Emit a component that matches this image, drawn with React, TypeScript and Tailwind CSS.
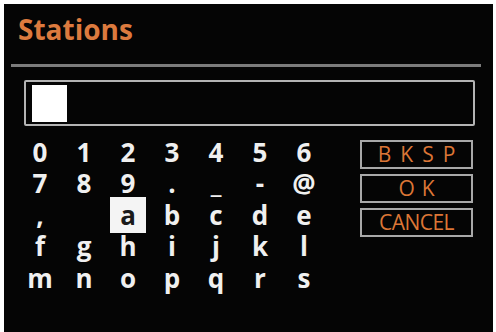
import React from 'react';

const rows: string[][] = [
  ['0', '1', '2', '3', '4', '5', '6'],
  ['7', '8', '9', '.', '_', '-', '@'],
  [',', ' ', 'a', 'b', 'c', 'd', 'e'],
  ['f', 'g', 'h', 'i', 'j', 'k', 'l'],
  ['m', 'n', 'o', 'p', 'q', 'r', 's'],
];

const selected = 'a';

const KeyCell: React.FC<{ ch: string }> = ({ ch }) => {
  const active = ch === selected;
  return (
    <div className="flex items-center justify-center h-[31.5px] w-[44px]">
      {active ? (
        <span className="flex items-center justify-center w-[36px] h-[36px] bg-[#f4f4f4] text-[#1a1a1a] leading-none">
          {ch}
        </span>
      ) : (
        <span className="leading-none">{ch}</span>
      )}
    </div>
  );
};

const ActionButton: React.FC<{ label: string; tracking?: string }> = ({ label, tracking = '' }) => (
  <div className="flex items-center justify-center w-[113px] h-[29px] border-2 border-[#a8a8a8] text-[#dc7636] text-[21px] font-medium leading-none">
    <span className={tracking}>{label}</span>
  </div>
);

export default function App() {
  return (
    <div className="w-[496px] h-[332px] bg-white pt-[4px] pl-[4px] pr-[3px] overflow-hidden">
      <div
        className="w-full h-[328px] bg-[#050505] flex flex-col"
        style={{ fontFamily: '"Open Sans", "Liberation Sans", sans-serif' }}
      >
        {/* Header */}
        <h1 className="ml-[14px] mt-[11px] text-[28px] leading-[28px] font-bold text-[#dc7a3e]">
          Stations
        </h1>
        <div className="ml-[7px] mt-[21px] w-[470px] h-[3px] bg-[#7c7c7c]" />

        {/* Text entry */}
        <div className="ml-[20px] mt-[13px] w-[451px] h-[46px] border-2 border-[#b4b4b4] rounded-[2px] flex items-center pl-[6px]">
          <div className="w-[35px] h-[37px] bg-white" />
        </div>

        {/* Keyboard */}
        <div className="flex mt-[10px]">
          <div className="ml-[14px] flex flex-col text-[26px] font-bold text-[#f0f0f0]">
            {rows.map((row, i) => (
              <div key={i} className="flex">
                {row.map((ch, j) => (
                  <KeyCell key={j} ch={ch} />
                ))}
              </div>
            ))}
          </div>
          <div className="ml-[34px] mt-[4px] flex flex-col gap-[5px]">
            <ActionButton label="BKSP" tracking="tracking-[9px] ml-[9px]" />
            <ActionButton label="OK" tracking="tracking-[7px] ml-[7px]" />
            <ActionButton label="CANCEL" tracking="tracking-[-0.5px]" />
          </div>
        </div>
      </div>
    </div>
  );
}
